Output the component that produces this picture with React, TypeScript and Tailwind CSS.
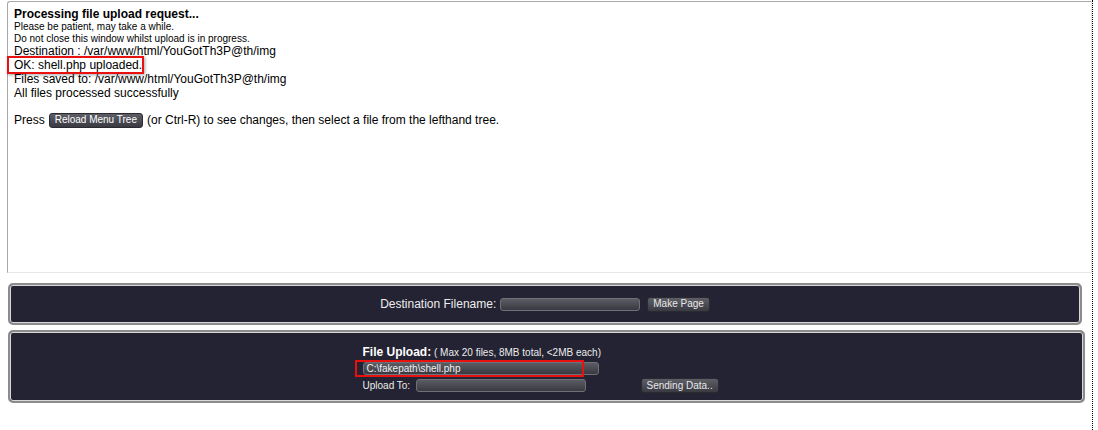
import React from 'react'

const font = "font-['Liberation_Sans',Arial,sans-serif]"

function DarkInput({ className }: { className: string }) {
  return (
    <div
      className={`h-[13px] rounded-[3px] border border-[#6f6f76] bg-gradient-to-b from-[#5c5c64] to-[#393941] ${className}`}
    />
  )
}

function DarkButton({ label, className = '' }: { label: string; className?: string }) {
  return (
    <span
      className={`inline-flex items-center justify-center h-[15px] px-[5px] rounded-[3px] border border-[#2a2a30] bg-gradient-to-b from-[#5e5e66] to-[#3a3a42] text-[10px] leading-none text-[#e8e8e8] ${className}`}
    >
      {label}
    </span>
  )
}

export default function App() {
  return (
    <div className={`flex w-[1098px] h-[430px] bg-white text-black ${font}`}>
      <div className="w-[1092px] pt-[1px] pl-[7px]">
        {/* upload log frame */}
        <div className="w-[1085px] h-[272px] rounded-tl-[3px] border-t border-l border-[#a8a8a8] border-b border-r border-b-[#e6e6e6] border-r-[#e6e6e6] pl-[6px] pt-[5px]">
          <div className="text-[12px] leading-[14px] font-bold">Processing file upload request...</div>
          <div className="text-[10px] leading-[11.5px]">Please be patient, may take a while.</div>
          <div className="text-[10px] leading-[11.5px]">Do not close this window whilst upload is in progress.</div>
          <div className="text-[12px] leading-[14px]">
            <div>Destination : /var/www/html/YouGotTh3P@th/img</div>
            <div>
              <span className="relative">
                OK: shell.php uploaded.
                <span className="absolute -left-[7px] -right-[2px] -top-[2px] -bottom-[2px] border-2 border-[#e8110f] shadow-[1px_1px_3px_rgba(0,0,0,0.35)]" />
              </span>
            </div>
            <div>Files saved to: /var/www/html/YouGotTh3P@th/img</div>
            <div>All files processed successfully</div>
            <div className="h-[12px]" />
            <div className="flex items-center h-[16px]">
              <span>Press</span>
              <DarkButton label="Reload Menu Tree" className="mx-[4px] text-white" />
              <span>(or Ctrl-R) to see changes, then select a file from the lefthand tree.</span>
            </div>
          </div>
        </div>

        {/* make page panel */}
        <div className="mt-[10px] ml-[1px] w-[1074px] h-[42px] rounded-[5px] border-2 border-[#8c8c8c] bg-[#242333] shadow-[inset_0_0_0_1px_#d8d8d8] flex items-center justify-center">
          <span className="text-[12px] text-[#ececec] mr-[4px]">Destination Filename:</span>
          <DarkInput className="w-[140px]" />
          <DarkButton label="Make Page" className="ml-[7px]" />
        </div>

        {/* file upload panel */}
        <div className="mt-[5px] ml-[1px] w-[1077px] h-[73px] rounded-[5px] border-2 border-[#8c8c8c] bg-[#242333] shadow-[inset_0_0_0_1px_#d8d8d8] flex justify-center pt-[12px]">
          <div className="w-[368px] text-[#ececec]">
            <div className="leading-[14px]">
              <span className="text-[12px] font-bold text-white">File Upload:</span>
              <span className="text-[10px]"> ( Max 20 files, 8MB total, &lt;2MB each)</span>
            </div>
            <div className="relative mt-[2px] w-[236px] h-[13px] rounded-[3px] border border-[#6f6f76] bg-gradient-to-b from-[#5c5c64] to-[#393941] flex">
              <span className="flex-1 text-[10px] leading-[11px] pl-[3px] text-[#f0f0f0]">C:\fakepath\shell.php</span>
              <span className="w-[16px] border-l border-[#2a2a30]" />
              <span className="absolute -left-[9px] -top-[3px] w-[229px] h-[17px] border-2 border-[#e8110f]" />
            </div>
            <div className="mt-[3px] flex items-center">
              <span className="text-[10px] w-[53px]">Upload To:</span>
              <DarkInput className="w-[170px]" />
              <DarkButton label="Sending Data.." className="ml-[55px]" />
            </div>
          </div>
        </div>
      </div>
      <div className="w-px h-full border-l border-dotted border-black" />
    </div>
  )
}
